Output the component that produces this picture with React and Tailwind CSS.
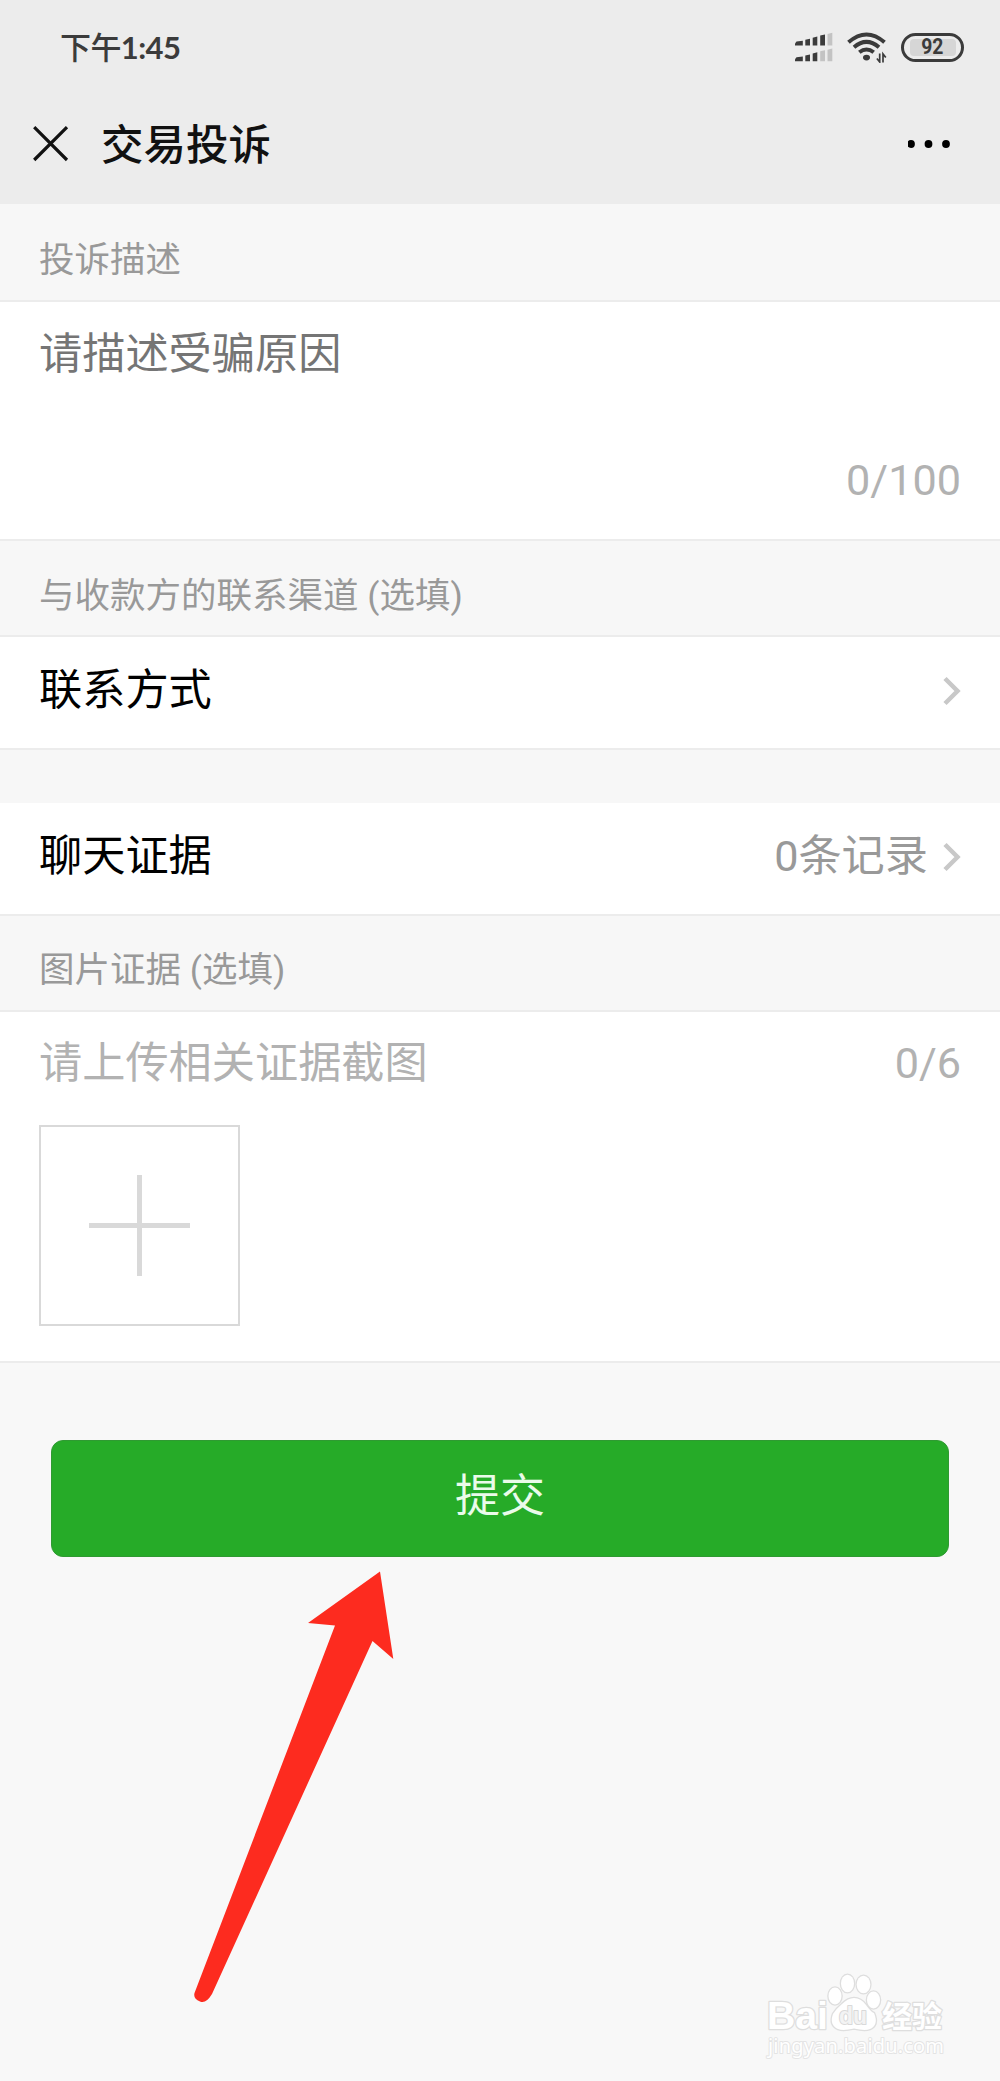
import React from "react";

function SignalIcon() {
  return (
    <svg className="h-[32px] w-[40px]" viewBox="0 0 40 32" fill="#3b3b3b">
      <path d="M1 12.500 2.500 10.500 8.800 9.800v4.800H1z" />
      <path d="M11.300 8.800 16 7.800v6.800h-4.700z" />
      <path d="M18.700 6.800 23.300 5.600v9h-4.600z" />
      <path d="M26.200 4.600 31 3.600v11h-4.800z" />
      <path d="M33.500 3 38.300 1.800v12.800h-4.800z" fill="#c3c3c3" />
      <path d="M1 28.200 2.500 26.200 8.800 25.500v4.800H1z" />
      <path d="M11.300 24.500 16 23.500v6.800h-4.700z" />
      <path d="M18.700 22.500 23.300 21.300v9h-4.600z" />
      <path d="M26.200 20.300 31 19.300v11h-4.800z" fill="#c3c3c3" />
      <path d="M33.500 18.700 38.300 17.500v12.800h-4.800z" fill="#c3c3c3" />
    </svg>
  );
}

function WifiIcon() {
  return (
    <svg className="h-[32px] w-[42px]" viewBox="0 0 42 32" fill="none" stroke="#3b3b3b">
      <path d="M2.500 11.300Q20.500-4.300 38.500 11.300" strokeWidth="4" />
      <path d="M8 16.300Q20.500 5.600 33 16.300" strokeWidth="4" />
      <path d="M13.300 21.300Q20.500 15.600 27.700 21.300" strokeWidth="4" />
      <ellipse cx="20.500" cy="26.600" rx="3.500" ry="2.800" fill="#3b3b3b" stroke="none" />
      <path d="M33.700 22.500v8.500l-2.800-3.500M37 31.500v-8.500l2.800 3.500" strokeWidth="1.700" />
    </svg>
  );
}

function StatusBar() {
  return (
    <div className="flex h-[94px] items-center pl-[60px] pr-[36px] text-[#3b3b3b]">
      <span className="font-['Lato','Noto_Sans_CJK_SC',sans-serif] text-[31px] font-medium leading-[40px] tracking-[-0.6px]">
        下午<span className="font-bold">1:45</span>
      </span>
      <div className="ml-auto flex items-center">
        <SignalIcon />
        <div className="ml-[12px]">
          <WifiIcon />
        </div>
        <div className="ml-[13px] flex h-[29px] w-[63px] items-center justify-center rounded-full border-[3px] border-[#3b3b3b]">
          <div className="flex h-[17px] w-[46px] items-center justify-center rounded-[4px] bg-[#d6d6d6]">
            <span className="scale-x-90 font-['Roboto',sans-serif] text-[21.500px] font-bold leading-[20px]">92</span>
          </div>
        </div>
      </div>
    </div>
  );
}

function TitleBar() {
  return (
    <div className="flex h-[100px] items-center pl-[33px] pr-[48px]">
      <svg className="h-[36px] w-[36px]" viewBox="0 0 36 36" fill="none" stroke="#111" strokeWidth="3.200">
        <path d="M1.200 1.200 34 34M34 1.200 1.200 34" />
      </svg>
      <h1 className="ml-[32px] pt-[4px] text-[42.500px] font-medium leading-[60px] text-[#111]">交易投诉</h1>
      <svg className="ml-auto h-[8px] w-[44px]" viewBox="0 0 44 8">
        <circle cx="3" cy="4" r="3.900" />
        <circle cx="20.500" cy="4" r="3.900" />
        <circle cx="38" cy="4" r="3.900" />
      </svg>
    </div>
  );
}

function SectionLabel({ children, className = "h-[96px] pt-[14px]" }) {
  return (
    <div className={`flex items-center whitespace-nowrap bg-[#f7f7f7] px-[39px] text-[35.500px] leading-[48px] text-[#999] ${className}`}>
      {children}
    </div>
  );
}

function Chevron() {
  return (
    <svg className="h-[30px] w-[20px]" viewBox="0 0 20 30" fill="none" stroke="#c8c8c8" strokeWidth="4.500">
      <path d="M3 2.500 15.500 15 3 27.500" />
    </svg>
  );
}

function CellRow({ label, value }) {
  return (
    <div className="flex h-[113px] items-center border-b-2 border-[#ececec] bg-white pb-[3px] pl-[39px] pr-[38px] text-[43.200px] leading-[60px]">
      <span className="text-black">{label}</span>
      <span className="ml-auto mr-[14px] text-[#999]">{value}</span>
      <Chevron />
    </div>
  );
}

function Arrow() {
  return (
    <svg className="absolute left-[190px] top-[1568px] h-[440px] w-[210px]" viewBox="190 1568 210 440" fill="#fd2b1f">
      <path d="M380 1571.500 393.300 1659 372.500 1641 212 1994Q206 2004 200 2001.500 193 1999 194.500 1993L335 1625.500 308 1623z" />
    </svg>
  );
}

function Watermark() {
  return (
    <svg
      className="absolute left-[760px] top-[1968px] h-[96px] w-[200px]"
      viewBox="760 1968 200 96"
      fill="#fff"
      stroke="#dedede"
      strokeWidth="2.600"
      paintOrder="stroke"
      strokeLinejoin="round"
    >
      <text x="767" y="2029" fontFamily="Liberation Sans" fontWeight="700" fontSize="39" textLength="61" lengthAdjust="spacingAndGlyphs">Bai</text>
      <ellipse cx="835" cy="1996" rx="6.500" ry="8.500" />
      <ellipse cx="847.500" cy="1983.500" rx="6.500" ry="8.800" />
      <ellipse cx="863.500" cy="1984.500" rx="6.800" ry="8.800" />
      <ellipse cx="873.500" cy="2000" rx="6.500" ry="8.500" />
      <path d="M854 1998Q861 1998 866 2005T874 2013Q879 2025 870 2029 865 2031 854 2028.500 843 2031 838 2029 829 2025 833 2014 836 2009 842 2004 848 1998 854 1998z" />
      <text x="839" y="2024" fontFamily="Liberation Sans" fontWeight="700" fontSize="23" fill="#f3f3f3" stroke="#d9d9d9" strokeWidth="2" textLength="28" lengthAdjust="spacingAndGlyphs">du</text>
      <text x="882" y="2027" fontFamily="Noto Sans CJK SC" fontWeight="700" fontSize="30" textLength="60">经验</text>
      <text x="768" y="2053" fontFamily="Noto Sans" fontSize="20" strokeWidth="2" stroke="#e4e4e4" textLength="176">jingyan.baidu.com</text>
    </svg>
  );
}

export default function App() {
  return (
    <div className="relative h-[2081px] w-[1000px] overflow-hidden bg-[#f8f8f8] font-['Roboto','Noto_Sans_CJK_SC',sans-serif]">
      <header className="h-[204px] bg-[#ececec]">
        <StatusBar />
        <TitleBar />
      </header>

      <SectionLabel className="h-[96px] pt-[16px]">投诉描述</SectionLabel>
      <section className="flex h-[241px] flex-col justify-between border-y-2 border-[#ececec] bg-white px-[39px] pb-[28px] pt-[23px] text-[43.200px] leading-[60px]">
        <p className="text-[#757575]">请描述受骗原因</p>
        <p className="text-right text-[#b2b2b2]">0/100</p>
      </section>

      <SectionLabel className="h-[96px] border-b-2 border-[#ececec] pt-[16px]">与收款方的联系渠道 (选填)</SectionLabel>
      <CellRow label="联系方式" />
      <div className="h-[53px] bg-[#f7f7f7]" />
      <CellRow label="聊天证据" value="0条记录" />

      <SectionLabel className="h-[94px] pt-[14px]">图片证据 (选填)</SectionLabel>
      <section className="h-[353px] border-y-2 border-[#ececec] bg-white px-[39px] pt-[22px]">
        <div className="flex justify-between text-[43.200px] leading-[60px] text-[#b2b2b2]">
          <span>请上传相关证据截图</span>
          <span>0/6</span>
        </div>
        <button className="mt-[31px] flex h-[201px] w-[201px] items-center justify-center border-2 border-[#d9d9d9]">
          <svg className="h-[101px] w-[101px]" viewBox="0 0 101 101" stroke="#d9d9d9" strokeWidth="5">
            <path d="M50.500 0v101M0 50.500h101" />
          </svg>
        </button>
      </section>

      <div className="px-[51px] pt-[77px]">
        <button className="flex h-[117px] w-full items-center justify-center rounded-[12px] border border-[#2f9a32] bg-[#26ab28] pb-[4px] text-[45px] leading-[60px] text-[#eafbea]">
          提交
        </button>
      </div>

      <Arrow />
      <Watermark />
    </div>
  );
}
